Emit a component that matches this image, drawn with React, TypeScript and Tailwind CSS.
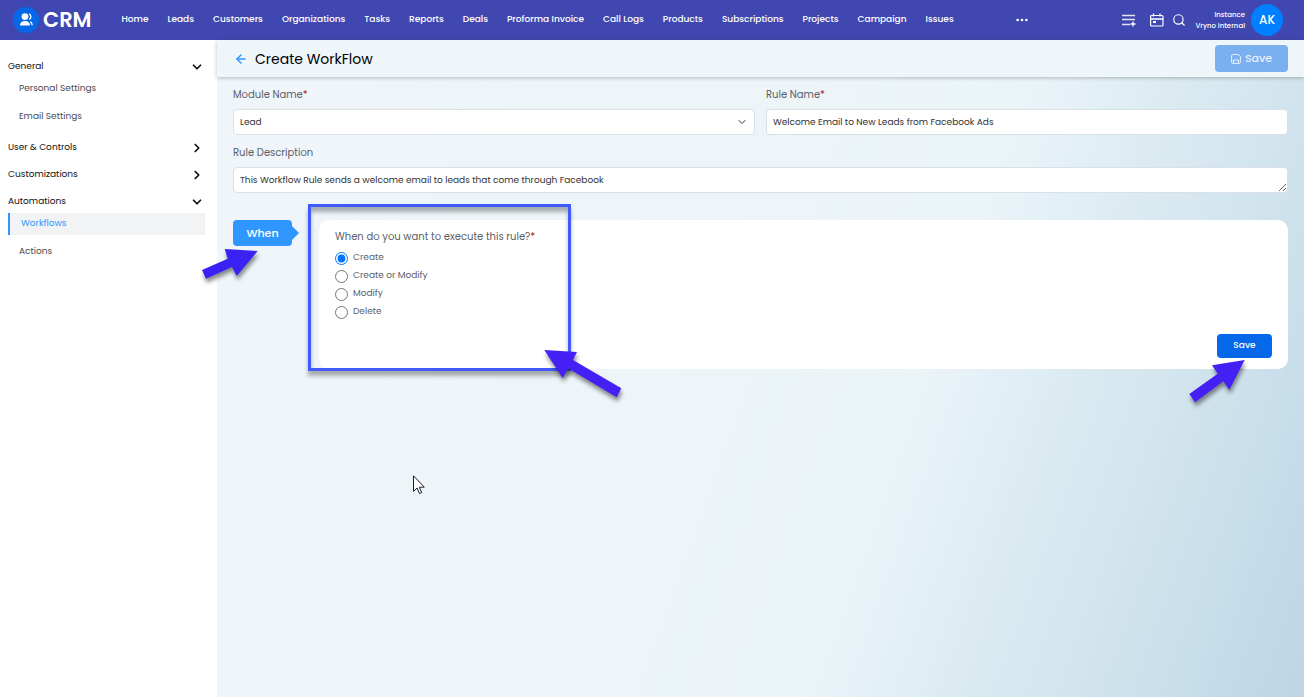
import { useState } from 'react';
import { ArrowLeft, ChevronDown, ChevronRight, Search } from 'lucide-react';
import { BsThreeDots } from 'react-icons/bs';

const navItems = [
  'Home',
  'Leads',
  'Customers',
  'Organizations',
  'Tasks',
  'Reports',
  'Deals',
  'Proforma Invoice',
  'Call Logs',
  'Products',
  'Subscriptions',
  'Projects',
  'Campaign',
  'Issues',
];

const sections = [
  { name: 'General', items: ['Personal Settings', 'Email Settings'] },
  { name: 'User & Controls', items: [] },
  { name: 'Customizations', items: [] },
  { name: 'Automations', items: ['Workflows', 'Actions'] },
];

const triggers = ['Create', 'Create or Modify', 'Modify', 'Delete'];

const fieldClass =
  'block h-[26px] w-full rounded border border-[#d9e0e6] bg-white px-[6px] text-[9px] leading-4 text-[#333] outline-none';

function TopBar() {
  return (
    <header className="flex h-10 shrink-0 items-center bg-[#4147b0] pr-[21px] pl-[13px] text-white">
      <a href="#" className="flex items-center gap-1">
        <svg viewBox="0 0 26 26" className="h-[26px] w-[26px]">
          <circle cx="13" cy="13" r="13" fill="#0568e8" />
          <circle cx="12" cy="9.6" r="3.4" fill="#fff" />
          <path d="M7 18.6c0-3 2-4.6 5-4.6s5 1.600 5 4.600z" fill="#fff" />
          <path
            d="M16.200 6.900a3.200 3.200 0 0 1 0 5.600M17.300 14.600c1.200.7 1.800 2 1.900 3.600"
            fill="none"
            stroke="#fff"
            strokeWidth="1.3"
          />
        </svg>
        <span className="text-[21px] font-semibold">CRM</span>
      </a>
      <nav className="ml-[30px] flex items-center gap-[19px] pb-[2px] text-[9px] font-medium whitespace-nowrap">
        {navItems.map((item) => (
          <a key={item} href="#" className="leading-4">
            {item}
          </a>
        ))}
      </nav>
      <button aria-label="More" className="ml-auto">
        <BsThreeDots className="h-[14px] w-[14px]" />
      </button>
      <div className="ml-[93px] flex items-center">
        <button aria-label="Add to list">
          <svg viewBox="0 0 14 14" className="h-[14px] w-[14px]" fill="none" stroke="#fff">
            <path d="M0 2.500h13M0 6.500h13M0 11.500h8" strokeWidth="1.300" opacity=".85" />
            <path d="M11 8.500v5M8.500 11h5" strokeWidth="1.300" />
          </svg>
        </button>
        <button aria-label="Calendar" className="ml-[14px]">
          <svg viewBox="0 0 14 14" className="h-[14px] w-[14px]" fill="none" stroke="#fff">
            <rect x=".6" y="2.500" width="12.400" height="10.500" rx="1" strokeWidth="1.200" />
            <path d="M1 6h12M3.500.5v3M10 .5v3" strokeWidth="1.300" />
            <rect x="3" y="8" width="3" height="2" fill="#fff" stroke="none" />
          </svg>
        </button>
        <button aria-label="Search" className="ml-2">
          <Search className="h-[14px] w-[14px]" strokeWidth={2} />
        </button>
      </div>
      <div className="ml-[9px] text-right text-[7px] leading-[11px] font-medium whitespace-nowrap">
        <p>Instance</p>
        <p>Vryno Internal</p>
      </div>
      <button className="ml-[6px] h-8 w-8 shrink-0 rounded-full bg-[#007fff] text-xs font-medium">AK</button>
    </header>
  );
}

function Sidebar() {
  return (
    <aside className="flex w-[217px] shrink-0 flex-col gap-[7px] bg-white pt-[17px] pr-3 pl-2 text-[9px]">
      {sections.map((section) => (
        <div key={section.name}>
          <button className="flex h-5 w-full items-center justify-between pr-px text-[#111]">
            {section.name}
            {section.items.length > 0 ? (
              <ChevronDown className="h-[14px] w-[14px]" strokeWidth={3} />
            ) : (
              <ChevronRight className="h-[14px] w-[14px]" strokeWidth={3} />
            )}
          </button>
          {section.items.length > 0 && (
            <ul className="mt-px flex flex-col gap-[6px] pb-[3px]">
              {section.items.map((item) => (
                <li key={item}>
                  <a
                    href="#"
                    className={
                      item === 'Workflows'
                        ? 'flex h-[22px] items-center border-l-2 border-[#2f96ff] bg-[#f2f3f5] pl-[11px] text-[#2f96ff]'
                        : 'flex h-[22px] items-center pl-[11px] text-[#4b4b4b]'
                    }
                  >
                    {item}
                  </a>
                </li>
              ))}
            </ul>
          )}
        </div>
      ))}
    </aside>
  );
}

function Pointer({ points, color, className }: { points: string; color: string; className: string }) {
  return (
    <svg
      viewBox="0 0 80 50"
      className={`pointer-events-none absolute z-10 h-[50px] w-20 overflow-visible drop-shadow-[1px_4px_2px_rgba(0,0,0,0.45)] ${className}`}
    >
      <polygon points={points} fill={color} />
    </svg>
  );
}

function Required() {
  return <span className="text-[#a3142a]">*</span>;
}

function RuleForm() {
  const [rule, setRule] = useState('Welcome Email to New Leads from Facebook Ads');
  const [description, setDescription] = useState(
    'This Workflow Rule sends a welcome email to leads that come through Facebook',
  );

  return (
    <div className="grid grid-cols-2 gap-x-[11px] gap-y-[10px] text-[10px] text-[#5c6068]">
      <div>
        <label htmlFor="module" className="mb-[6px] block leading-4">
          Module Name
          <Required />
        </label>
        <div className="relative">
          <select id="module" className={`${fieldClass} appearance-none`}>
            <option>Lead</option>
          </select>
          <ChevronDown
            className="pointer-events-none absolute top-[7px] right-[7px] h-3 w-3 text-[#333]"
            strokeWidth={2}
          />
        </div>
      </div>
      <div>
        <label htmlFor="rule" className="mb-[6px] block leading-4">
          Rule Name
          <Required />
        </label>
        <input id="rule" className={fieldClass} value={rule} onChange={(e) => setRule(e.target.value)} />
      </div>
      <div className="col-span-2">
        <label htmlFor="description" className="mb-[6px] block leading-4">
          Rule Description
        </label>
        <textarea
          id="description"
          rows={1}
          className={`${fieldClass} overflow-hidden py-1`}
          value={description}
          onChange={(e) => setDescription(e.target.value)}
        />
      </div>
    </div>
  );
}

function WhenStep() {
  const [trigger, setTrigger] = useState('Create');

  return (
    <div className="mt-[27px] flex items-start">
      <div className="relative flex w-[86px] shrink-0 items-center">
        <button className="h-[26px] w-[59px] rounded bg-[#2f96ff] text-[11px] font-medium text-white">When</button>
        <svg viewBox="0 0 7 14" className="h-[14px] w-[7px]">
          <path d="M0 0l7 7-7 7z" fill="#2f96ff" />
        </svg>
        <Pointer
          points="55.7,5 22.7,3 25.7,12.7 0,24 4,32.7 30,21 34.7,30"
          color="#3a22f5"
          className="top-[26px] left-[-31px]"
        />
      </div>
      <section className="relative flex min-h-[149px] flex-1 flex-col rounded-[10px] bg-white px-4 pt-[9px] pb-[11px] text-[10px] text-[#5c6068]">
        <fieldset>
          <legend className="leading-4">
            When do you want to execute this rule?
            <Required />
          </legend>
          <div className="mt-1 flex flex-col text-[9px]">
            {triggers.map((item) => (
              <label key={item} className="flex h-[18px] items-center gap-[5px]">
                <input
                  type="radio"
                  name="trigger"
                  className="h-[13px] w-[13px]"
                  checked={trigger === item}
                  onChange={() => setTrigger(item)}
                />
                {item}
              </label>
            ))}
          </div>
        </fieldset>
        <div className="relative mt-auto self-end">
          <button className="block h-6 w-[55px] rounded bg-[#0568e8] text-[9px] font-medium text-white">Save</button>
          <Pointer
            points="55.7,0 23,5.300 28.700,13.700 0.300,34 6,42.300 34.300,21.300 40.300,29.700"
            color="#4420f5"
            className="top-[26px] left-[-28px]"
          />
        </div>
        {/* highlighted area */}
        <div className="pointer-events-none absolute -top-4 left-[-11px] h-[167px] w-[263px] border-[3px] border-[#3f5bff] shadow-[0_5px_4px_rgba(0,0,0,0.3),inset_0_5px_4px_rgba(0,0,0,0.3)]" />
        <Pointer
          points="0.300,0 33,2 29,10 77.300,38.300 72.700,47.300 24,18.300 18.700,28"
          color="#4420f5"
          className="top-[130px] left-[225px]"
        />
      </section>
    </div>
  );
}

export default function App() {
  return (
    <div className="flex min-h-screen flex-col font-['Poppins','Inter',sans-serif] text-[10px]">
      <TopBar />
      <div className="flex flex-1">
        <Sidebar />
        <main className="relative flex min-w-0 flex-1 flex-col bg-[linear-gradient(110deg,#f0f5fa_0%,#edf5f9_35%,#ebf4f7_62%,#e6f1f8_66%,#dcebf2_73%,#d0e3ec_84%,#c4dcea_93%,#bdd5e4_100%)]">
          <div className="flex h-[37px] items-center bg-[#eef6fa] pr-4 pl-[17px] shadow-[0_1px_4px_rgba(0,0,0,0.25)]">
            <button aria-label="Back" className="text-[#2f96ff]">
              <ArrowLeft className="h-[14px] w-[14px]" strokeWidth={2.5} />
            </button>
            <h1 className="ml-[7px] text-sm text-black">Create WorkFlow</h1>
            <button className="ml-auto flex h-[27px] w-[73px] items-center justify-center gap-1 rounded bg-[#7aaff0] text-[11px] font-medium text-[#e6f1fd]">
              <svg viewBox="0 0 10 10" className="h-[10px] w-[10px]" fill="none" stroke="currentColor">
                <path d="M.6 1.600a1 1 0 0 1 1-1h6l1.800 1.800v6a1 1 0 0 1-1 1H1.600a1 1 0 0 1-1-1z" />
                <path d="M2.500 9.200V6h5v3.200" />
              </svg>
              Save
            </button>
          </div>
          <div className="px-4 pt-[10px]">
            <RuleForm />
            <WhenStep />
          </div>
          <svg viewBox="0 0 12 20" className="pointer-events-none absolute top-[435px] left-[196px] h-5 w-3">
            <path
              d="M.5.800v15.600l3.600-3.400 2.400 5.500 2.200-.9-2.400-5.400h5z"
              fill="#fff"
              stroke="#1b1b2b"
            />
          </svg>
        </main>
      </div>
    </div>
  );
}
